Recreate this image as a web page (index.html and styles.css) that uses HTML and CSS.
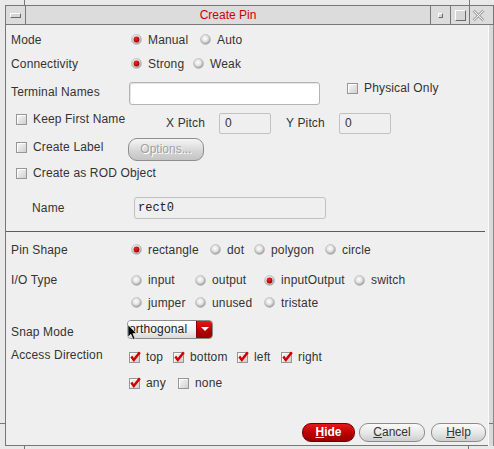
FILE: index.html
```html
<!DOCTYPE html>
<html>
<head>
<meta charset="utf-8">
<title>Create Pin</title>
<link rel="stylesheet" href="styles.css">
</head>
<body>
<svg class="defs" width="0" height="0" aria-hidden="true">
  <defs>
    <radialGradient id="rg" cx="45%" cy="40%" r="62%">
      <stop offset="0" stop-color="#ffffff"/>
      <stop offset="0.5" stop-color="#e2e2e2"/>
      <stop offset="1" stop-color="#8e8e8e"/>
    </radialGradient>
    <radialGradient id="rd" cx="40%" cy="35%" r="65%">
      <stop offset="0" stop-color="#ff2020"/>
      <stop offset="1" stop-color="#a00000"/>
    </radialGradient>
    <linearGradient id="cbg" x1="0" y1="0" x2="1" y2="1">
      <stop offset="0" stop-color="#fbfbfb"/>
      <stop offset="1" stop-color="#cdcdcd"/>
    </linearGradient>
    <symbol id="r-off" viewBox="0 0 11 11">
      <circle cx="5.5" cy="5.5" r="5" fill="url(#rg)" stroke="#bdbdbd" stroke-width="0.6"/>
    </symbol>
    <symbol id="r-on" viewBox="0 0 11 11">
      <circle cx="5.5" cy="5.5" r="5" fill="url(#rg)" stroke="#bdbdbd" stroke-width="0.6"/>
      <circle cx="5.5" cy="5.5" r="2.9" fill="url(#rd)"/>
    </symbol>
    <symbol id="c-off" viewBox="0 0 12 12">
      <rect x="0.5" y="1.5" width="10" height="10" fill="url(#cbg)" stroke="#969696" stroke-width="1"/>
      <path d="M1.5 10.5 V2.5 H9.5" fill="none" stroke="#ffffff" stroke-width="1"/>
    </symbol>
    <symbol id="c-on" viewBox="0 0 12 12">
      <rect x="0.5" y="1.5" width="10" height="10" fill="url(#cbg)" stroke="#969696" stroke-width="1"/>
      <path d="M1.5 10.5 V2.5 H9.5" fill="none" stroke="#ffffff" stroke-width="1"/>
      <path d="M2.3 5.6 L4.8 9 L10.8 1.2" fill="none" stroke="#d00000" stroke-width="2.5"/>
    </symbol>
  </defs>
</svg>

<div class="marks-top"><span class="mk-l"></span><span class="mk-r"></span></div>

<div class="titlebar">
  <div class="tb-btn tb-menu"><span class="ico ico-menu"></span></div>
  <div class="tb-title">Create Pin</div>
  <div class="tb-btn tb-min"><span class="ico ico-min"></span></div>
  <div class="tb-btn tb-max"><span class="ico ico-max"></span></div>
  <div class="tb-btn tb-close">
    <svg width="13" height="13" viewBox="0 0 13 13">
      <path d="M1.5 1.5 L11.5 11.5 M11.5 1.5 L1.5 11.5" stroke="#a6a6a6" stroke-width="2.8"/>
      <path d="M1.5 1.5 L11.5 11.5 M11.5 1.5 L1.5 11.5" stroke="#f4f4f4" stroke-width="1"/>
    </svg>
  </div>
</div>

<div class="win">
  <div class="side side-l"><div class="side-mark"></div></div>

  <div class="panel">
    <div class="row r-mode">
      <div class="label">Mode</div>
      <div class="opts opts-mode">
        <label class="opt"><svg class="rb"><use href="#r-on"/></svg>Manual</label>
        <label class="opt"><svg class="rb"><use href="#r-off"/></svg>Auto</label>
      </div>
    </div>

    <div class="row r-conn">
      <div class="label">Connectivity</div>
      <div class="opts opts-conn">
        <label class="opt"><svg class="rb"><use href="#r-on"/></svg>Strong</label>
        <label class="opt"><svg class="rb"><use href="#r-off"/></svg>Weak</label>
      </div>
    </div>

    <div class="row r-term">
      <div class="label label-term">Terminal Names</div>
      <div class="field field-term"></div>
      <label class="chk chk-phys"><svg class="cb"><use href="#c-off"/></svg>Physical Only</label>
    </div>

    <div class="row r-keep">
      <label class="chk chk-keep"><svg class="cb"><use href="#c-off"/></svg>Keep First Name</label>
      <div class="pitch-label">X Pitch</div>
      <div class="field field-pitch">0</div>
      <div class="pitch-label pitch-label-y">Y Pitch</div>
      <div class="field field-pitch">0</div>
    </div>

    <div class="row r-clabel">
      <label class="chk chk-clabel"><svg class="cb"><use href="#c-off"/></svg>Create Label</label>
      <div class="btn-options">Options...</div>
    </div>

    <div class="row r-rod">
      <label class="chk"><svg class="cb"><use href="#c-off"/></svg>Create as ROD Object</label>
    </div>

    <div class="row r-name">
      <div class="label label-name">Name</div>
      <div class="field field-name">rect0</div>
    </div>

    <div class="separator"></div>

    <div class="row r-shape">
      <div class="label">Pin Shape</div>
      <div class="opts opts-shape">
        <label class="opt"><svg class="rb"><use href="#r-on"/></svg>rectangle</label>
        <label class="opt"><svg class="rb"><use href="#r-off"/></svg>dot</label>
        <label class="opt"><svg class="rb"><use href="#r-off"/></svg>polygon</label>
        <label class="opt"><svg class="rb"><use href="#r-off"/></svg>circle</label>
      </div>
    </div>

    <div class="row r-io">
      <div class="label label-io">I/O Type</div>
      <div class="opts opts-io">
        <label class="opt"><svg class="rb"><use href="#r-off"/></svg>input</label>
        <label class="opt"><svg class="rb"><use href="#r-off"/></svg>output</label>
        <label class="opt"><svg class="rb"><use href="#r-on"/></svg>inputOutput</label>
        <label class="opt"><svg class="rb"><use href="#r-off"/></svg>switch</label>
        <label class="opt"><svg class="rb"><use href="#r-off"/></svg>jumper</label>
        <label class="opt"><svg class="rb"><use href="#r-off"/></svg>unused</label>
        <label class="opt"><svg class="rb"><use href="#r-off"/></svg>tristate</label>
      </div>
    </div>

    <div class="row r-snap">
      <div class="label label-snap">Snap Mode</div>
      <div class="combo">
        <div class="combo-text">orthogonal</div>
        <div class="combo-arrow"><span class="tri"></span></div>
      </div>
    </div>

    <div class="row r-acc">
      <div class="label label-acc">Access Direction</div>
      <div class="acc-opts">
        <div class="acc-row acc-row1">
          <label class="chk"><svg class="cb"><use href="#c-on"/></svg>top</label>
          <label class="chk"><svg class="cb"><use href="#c-on"/></svg>bottom</label>
          <label class="chk"><svg class="cb"><use href="#c-on"/></svg>left</label>
          <label class="chk"><svg class="cb"><use href="#c-on"/></svg>right</label>
        </div>
        <div class="acc-row acc-row2">
          <label class="chk"><svg class="cb"><use href="#c-on"/></svg>any</label>
          <label class="chk"><svg class="cb"><use href="#c-off"/></svg>none</label>
        </div>
      </div>
    </div>

    <div class="buttons">
      <div class="btn btn-hide"><u>H</u>ide</div>
      <div class="btn btn-cancel"><u>C</u>ancel</div>
      <div class="btn btn-help"><u>H</u>elp</div>
    </div>
  </div>

  <div class="side side-r"><div class="side-mark"></div></div>
</div>

<div class="marks-bottom"><span class="mk-bl"></span><span class="mk-br"></span></div>

<svg class="cursor" width="11" height="17" viewBox="0 0 11 17">
  <path d="M1 0.8 L1 13 L3.9 10.3 L6.1 15.4 L8 14.6 L5.9 9.6 L9.6 9.6 Z" fill="#000" stroke="#fff" stroke-width="0.6"/>
</svg>
</body>
</html>
```

FILE: styles.css
```css
* { box-sizing: border-box; }

html, body {
  margin: 0;
  padding: 0;
}

body {
  width: 494px;
  height: 449px;
  overflow: hidden;
  position: relative;
  background: #e9e9e9;
  font-family: "Liberation Sans", Arial, sans-serif;
  font-size: 12px;
  color: #333;
}

.defs {
  position: absolute;
  width: 0;
  height: 0;
}

/* window manager frame */
.marks-top {
  height: 5px;
  display: flex;
  justify-content: space-between;
}
.mk-l { width: 25px; border-right: 1px solid #777; }
.mk-r { width: 25px; border-left: 1px solid #777; }

.titlebar {
  margin-left: 5px;
  height: 20px;
  border: 1px solid #777;
  background: #dcdcdc;
  display: flex;
}
.tb-btn {
  flex: none;
  display: flex;
  align-items: center;
  justify-content: center;
}
.tb-menu { width: 20px; border-right: 1px solid #777; }
.tb-title {
  flex: 1;
  text-align: center;
  line-height: 18px;
  color: #d00000;
}
.tb-min { width: 20px; border-left: 1px solid #777; }
.tb-max { width: 19px; border-left: 1px solid #777; }
.tb-close {
  width: 24px;
  border-left: 1px solid #777;
  justify-content: flex-start;
  padding-left: 2px;
}
.ico {
  display: block;
  border: 1px solid;
  border-color: #ffffff #6a6a6a #6a6a6a #ffffff;
  background: #d6d6d6;
}
.ico-menu { width: 11px; height: 5px; }
.ico-min { width: 5px; height: 5px; }
.ico-max { width: 11px; height: 11px; }

.win {
  display: flex;
  height: 421px;
}
.side { flex: none; }
.side-l { width: 5px; }
.side-r {
  width: 6px;
  background: #d9d9d9;
  border-left: 1px solid #fafafa;
  border-right: 1px solid #8a8a8a;
}
.side-mark {
  height: 399px;
  border-bottom: 1px solid #777;
}

.marks-bottom {
  height: 3px;
  display: flex;
  justify-content: space-between;
}
.mk-bl { width: 25px; border-right: 1px solid #777; }
.mk-br { width: 26px; border-left: 1px solid #777; }

/* dialog panel */
.panel {
  flex: 1;
  background: #efefef;
  border-left: 1px solid #777;
  border-bottom: 1px solid #777;
  display: flex;
  flex-direction: column;
  padding-top: 3px;
  letter-spacing: 0.15px;
}

.row {
  display: flex;
  align-items: center;
  padding-left: 5px;
  flex: none;
}
.label {
  width: 120px;
  flex: none;
  white-space: nowrap;
}

.opt, .chk {
  display: flex;
  align-items: center;
  white-space: nowrap;
}
.rb {
  width: 11px;
  height: 11px;
  margin-right: 6px;
  flex: none;
}
.cb {
  width: 12px;
  height: 12px;
  margin-right: 5px;
  flex: none;
}

.opts { display: grid; }

.r-mode { height: 23px; }
.opts-mode { grid-template-columns: 69px auto; }

.r-conn { height: 25px; }
.opts-conn { grid-template-columns: 62px auto; }

.r-term { height: 32px; }
.label-term { width: 118px; }
.field {
  flex: none;
  border: 1px solid #bcbcbc;
  border-radius: 3px;
}
.field-term {
  width: 191px;
  height: 23px;
  margin-top: 3px;
  background: #ffffff;
  border-color: #b4b4b4;
  box-shadow: inset 1px 1px 0 #e4e4e4;
}
.chk-phys {
  margin-left: 27px;
  margin-bottom: 8px;
}

.r-keep {
  height: 28px;
  padding-left: 10px;
}
.chk-keep {
  width: 150px;
  flex: none;
  margin-bottom: 6px;
}
.pitch-label {
  width: 53px;
  flex: none;
  margin-top: 2px;
}
.pitch-label-y { margin-left: 15px; }
.field-pitch {
  width: 52px;
  height: 21px;
  margin-top: 3px;
  padding-left: 5px;
  line-height: 19px;
  background: #efefef;
  border-color: #c2c2c2;
  border-radius: 2px;
}

.r-clabel {
  height: 26px;
  padding-left: 10px;
}
.chk-clabel {
  width: 112px;
  flex: none;
  margin-bottom: 4px;
}
.btn-options {
  width: 76px;
  height: 23px;
  border: 1px solid #8e8e8e;
  border-radius: 9px;
  background: linear-gradient(#f6f6f6, #d4d4d4 60%, #c4c4c4);
  color: #a2a2a2;
  text-shadow: 1px 1px 0 #ffffff;
  text-align: center;
  line-height: 21px;
  letter-spacing: 0;
}

.r-rod {
  height: 22px;
  padding-left: 10px;
}

.r-name {
  height: 26px;
  margin-top: 11px;
  padding-left: 26px;
}
.label-name { width: 102px; }
.field-name {
  width: 192px;
  height: 22px;
  padding-left: 3px;
  line-height: 20px;
  background: #efefef;
  border-color: #c0c0c0;
  font-family: "Liberation Mono", "Courier New", monospace;
  font-size: 12px;
  letter-spacing: 0;
  color: #222;
}

.separator {
  flex: none;
  height: 1px;
  margin-top: 10px;
  margin-right: 3px;
  background: #5c5c5c;
}

.r-shape {
  height: 23px;
  margin-top: 6px;
}
.opts-shape { grid-template-columns: 79px 44px 71px auto; }

.r-io {
  margin-top: 8px;
  align-items: flex-start;
}
.label-io { line-height: 22px; }
.opts-io {
  grid-template-columns: 64px 69px 90px auto;
  grid-template-rows: 22px 23px;
}

.r-snap {
  height: 20px;
  margin-top: 5px;
}
.label-snap {
  width: 116px;
  margin-top: 5px;
}
.combo {
  width: 86px;
  height: 19px;
  display: flex;
  flex: none;
  border: 1px solid #8a8a8a;
  border-radius: 4px;
  overflow: hidden;
}
.combo-text {
  flex: 1;
  padding-left: 1px;
  line-height: 17px;
  color: #222;
  background: linear-gradient(#ffffff, #f2f2f2 50%, #dadada);
}
.combo-arrow {
  width: 16px;
  flex: none;
  display: flex;
  align-items: center;
  justify-content: center;
  background: linear-gradient(#e41818, #b40000 60%, #9a0000);
  border-left: 1px solid #8a0000;
}
.tri {
  width: 0;
  height: 0;
  border-left: 4px solid transparent;
  border-right: 4px solid transparent;
  border-top: 4px solid #ffffff;
}

.r-acc {
  margin-top: 6px;
  align-items: flex-start;
}
.label-acc {
  width: 118px;
  margin-top: 3px;
}
.acc-opts {
  display: flex;
  flex-direction: column;
}
.acc-row {
  display: grid;
  align-items: center;
}
.acc-row1 {
  height: 24px;
  grid-template-columns: 44px 64px 44px auto;
}
.acc-row2 {
  height: 28px;
  grid-template-columns: 49px auto;
}

.buttons {
  margin-top: auto;
  margin-bottom: 3px;
  margin-right: 2px;
  display: flex;
  justify-content: flex-end;
  flex: none;
  letter-spacing: 0;
}
.btn {
  height: 19px;
  border: 1px solid #8c8c8c;
  border-radius: 9px;
  background: linear-gradient(#fbfbfb, #e6e6e6 55%, #cdcdcd);
  text-align: center;
  line-height: 17px;
  color: #333;
  flex: none;
}
.btn-hide {
  width: 53px;
  background: linear-gradient(#e21a1a, #bb0000 55%, #960000);
  border-color: #6e0000;
  color: #ffffff;
  font-weight: bold;
}
.btn-cancel {
  width: 66px;
  margin-left: 4px;
}
.btn-help {
  width: 55px;
  margin-left: 6px;
}

.cursor {
  position: absolute;
  left: 127px;
  top: 324px;
}
```
